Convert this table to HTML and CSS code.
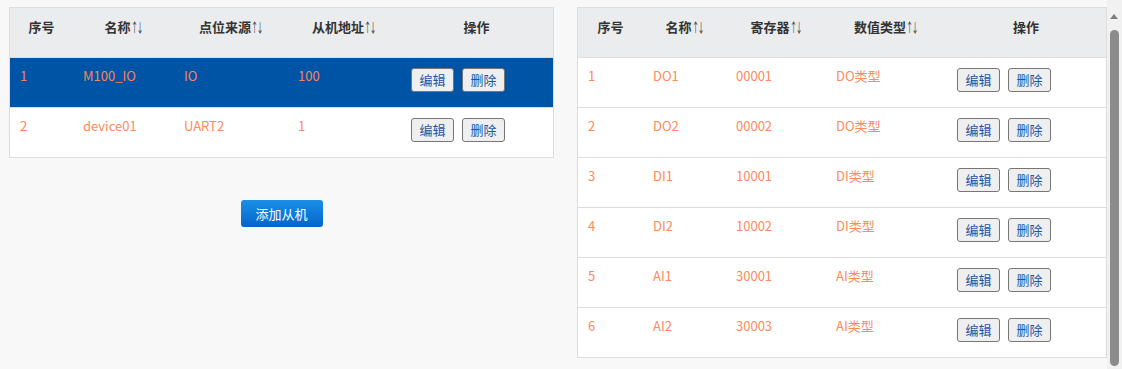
FILE: index.html
```html
<!DOCTYPE html>
<html lang="zh-CN">
<head>
<meta charset="utf-8">
<title>从机配置</title>
<link rel="stylesheet" href="styles.css">
</head>
<body>
<div class="page">
  <section class="left">
    <div class="grid slaves">
      <div class="row head">
        <div class="th">序号</div>
        <div class="th">名称<span class="sort">↑↓</span></div>
        <div class="th">点位来源<span class="sort">↑↓</span></div>
        <div class="th">从机地址<span class="sort">↑↓</span></div>
        <div class="th">操作</div>
      </div>
      <div class="row selected">
        <div class="td">1</div>
        <div class="td">M100_IO</div>
        <div class="td">IO</div>
        <div class="td">100</div>
        <div class="td ops"><button class="btn">编辑</button><button class="btn">删除</button></div>
      </div>
      <div class="row">
        <div class="td">2</div>
        <div class="td">device01</div>
        <div class="td">UART2</div>
        <div class="td">1</div>
        <div class="td ops"><button class="btn">编辑</button><button class="btn">删除</button></div>
      </div>
    </div>
    <div class="add-wrap"><button class="add-btn">添加从机</button></div>
  </section>
  <section class="right">
    <div class="grid points">
      <div class="row head">
        <div class="th">序号</div>
        <div class="th">名称<span class="sort">↑↓</span></div>
        <div class="th">寄存器<span class="sort">↑↓</span></div>
        <div class="th">数值类型<span class="sort">↑↓</span></div>
        <div class="th">操作</div>
      </div>
      <div class="row"><div class="td">1</div><div class="td">DO1</div><div class="td">00001</div><div class="td">DO类型</div><div class="td ops"><button class="btn">编辑</button><button class="btn">删除</button></div></div>
      <div class="row"><div class="td">2</div><div class="td">DO2</div><div class="td">00002</div><div class="td">DO类型</div><div class="td ops"><button class="btn">编辑</button><button class="btn">删除</button></div></div>
      <div class="row"><div class="td">3</div><div class="td">DI1</div><div class="td">10001</div><div class="td">DI类型</div><div class="td ops"><button class="btn">编辑</button><button class="btn">删除</button></div></div>
      <div class="row"><div class="td">4</div><div class="td">DI2</div><div class="td">10002</div><div class="td">DI类型</div><div class="td ops"><button class="btn">编辑</button><button class="btn">删除</button></div></div>
      <div class="row"><div class="td">5</div><div class="td">AI1</div><div class="td">30001</div><div class="td">AI类型</div><div class="td ops"><button class="btn">编辑</button><button class="btn">删除</button></div></div>
      <div class="row"><div class="td">6</div><div class="td">AI2</div><div class="td">30003</div><div class="td">AI类型</div><div class="td ops"><button class="btn">编辑</button><button class="btn">删除</button></div></div>
    </div>
  </section>
</div>
<div class="scrollbar">
  <div class="arrow"></div>
  <div class="thumb"></div>
</div>
</body>
</html>
```

FILE: styles.css
```css
* { box-sizing: border-box; }
html, body { margin: 0; padding: 0; }
body {
  background: #f8f8f8;
  font-family: "Noto Sans CJK SC", "Noto Sans", "Liberation Sans", sans-serif;
  font-size: 13px;
  color: #333;
  width: 1107px;
  height: 369px;
  overflow: hidden;
}
.page {
  display: flex;
  align-items: flex-start;
  gap: 23px;
  padding: 7px 0 0 9px;
}
.left { width: 545px; }
.right { width: 530px; }
.grid {
  background: #fff;
  border: 1px solid #ddd;
}
.row {
  display: grid;
  height: 50px;
  border-bottom: 1px solid #ddd;
}
.row:last-child { height: 49px; border-bottom: none; }
.slaves .row { grid-template-columns: 63px 101px 114px 112px 1fr; }
.points .row { grid-template-columns: 65px 83px 100px 120px 1fr; }
.head { background: #ebecee; }
.th {
  font-weight: bold;
  color: #333;
  text-align: center;
  line-height: 18px;
  padding-top: 10px;
  white-space: nowrap;
}
.sort {
  display: inline-block;
  font-weight: normal;
  transform: scaleX(0.55);
  transform-origin: left center;
  letter-spacing: -3px;
  margin-right: -8px;
}
.td {
  color: #ff8a5c;
  line-height: 18px;
  padding: 9px 0 0 10px;
  white-space: nowrap;
}
.selected { background: #0054a5; }
.selected .td { color: #f8845f; }
.td.ops {
  padding-top: 10px;
  padding-left: 11px;
  display: flex;
  gap: 8px;
  align-items: flex-start;
}
.btn {
  font-family: inherit;
  font-size: 13px;
  line-height: 22px;
  height: 24px;
  width: 43px;
  padding: 0;
  color: #1f55a3;
  background: #efefef;
  border: 1px solid #767676;
  border-radius: 3px;
}
.add-wrap {
  display: flex;
  justify-content: center;
  margin-top: 42px;
}
.add-btn {
  width: 82px;
  height: 27px;
  padding: 0;
  font-family: inherit;
  font-size: 13px;
  color: #fff;
  border: none;
  border-radius: 3px;
  background: linear-gradient(#1a90e6, #0563c9);
}
.scrollbar {
  position: fixed;
  top: 0;
  right: 0;
  width: 15px;
  height: 369px;
  background: #f1f1f1;
}
.arrow {
  position: absolute;
  top: 14px;
  left: 3px;
  width: 0;
  height: 0;
  border-left: 4.5px solid transparent;
  border-right: 4.5px solid transparent;
  border-bottom: 5px solid #7d7d7d;
}
.thumb {
  position: absolute;
  top: 30px;
  left: 3px;
  width: 9px;
  height: 336px;
  border-radius: 5px;
  background: #8b8b8b;
}
```
